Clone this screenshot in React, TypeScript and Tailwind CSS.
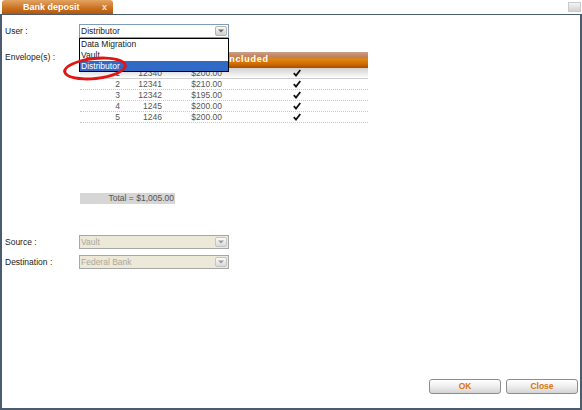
import React from 'react';

type Row = { n: number; env: string; amount: string };

const ROWS: Row[] = [
  { n: 1, env: '12340', amount: '$200.00' },
  { n: 2, env: '12341', amount: '$210.00' },
  { n: 3, env: '12342', amount: '$195.00' },
  { n: 4, env: '1245', amount: '$200.00' },
  { n: 5, env: '1246', amount: '$200.00' },
];

function Arrow({ disabled }: { disabled?: boolean }) {
  return (
    <div
      className={`flex h-[10px] w-[12px] items-center justify-center rounded-[2px] border ${
        disabled ? 'border-[#c4c4c4] bg-[linear-gradient(#fbfbfb,#d9d9d9)]' : 'border-[#b4b4b4] bg-[linear-gradient(#fafafa,#cfcfcf)]'
      }`}
    >
      <svg width="6" height="4" viewBox="0 0 6 4">
        <path d="M0 0.5h6L3 3.5z" fill={disabled ? '#9a9a9a' : '#6b6b6b'} />
      </svg>
    </div>
  );
}

function Select({ value, disabled }: { value: string; disabled?: boolean }) {
  return (
    <div
      className={`flex h-[14px] w-[150px] items-center justify-between border pl-[1px] pr-[1px] ${
        disabled ? 'border-[#a7a7a7] bg-[#ece9d8] text-[#aca899]' : 'border-[#7f9db9] bg-white text-[#222]'
      }`}
    >
      <span className="leading-[12px]">{value}</span>
      <Arrow disabled={disabled} />
    </div>
  );
}

function Check() {
  return (
    <svg width="8" height="8" viewBox="0 0 8 8">
      <path d="M0.8 4.2L3 6.6L7.3 1" fill="none" stroke="#111" strokeWidth="1.8" />
    </svg>
  );
}

function Button({ label }: { label: string }) {
  return (
    <button className="flex h-[15px] w-[72px] items-center justify-center rounded-[3px] border border-[#8d8d8d] bg-[linear-gradient(#ffffff,#f0f0f0_45%,#d4d4d4)] text-[8.5px] font-bold leading-none text-[#d9780f]">
      {label}
    </button>
  );
}

export default function App() {
  return (
    <div className="flex h-[410px] w-[582px] flex-col bg-white font-['Liberation_Sans',Arial,sans-serif] text-[8.5px] text-[#1a1a1a]">
      {/* tab strip */}
      <div className="flex h-[14px] items-start">
        <div className="ml-[2px] flex h-[14px] w-[111px] items-center rounded-t-[3px] bg-[linear-gradient(#e3a462,#cc7424_55%,#b3560c)] pl-[21px] pr-[4px]">
          <span className="text-[9px] font-bold leading-none text-white">Bank deposit</span>
          <span className="ml-auto mr-[2px] text-[9px] font-bold leading-none text-[#f3e3d3]">x</span>
        </div>
        <div className="ml-auto mr-[1px] mt-[2px] h-[10px] w-[13px] border border-[#c9c9c9] bg-[linear-gradient(#f4f4f4,#d2d2d2)]" />
      </div>

      {/* window body */}
      <div className="relative flex flex-1 flex-col border-b-2 border-l-2 border-r-2 border-t border-[#4b5c6e]">
        <div className="flex flex-col pl-[3px] pt-[9px]">
          <div className="flex items-center">
            <span className="w-[74px]">User :</span>
            <Select value="Distributor" />
          </div>

          <div className="mt-[14px] flex items-start">
            <span className="w-[74px] leading-[11px]">Envelope(s) :</span>
            <div className="ml-[1px] flex w-[288px] flex-col text-[#555]">
              <div className="flex h-[16px] items-center bg-[linear-gradient(#c9a089,#c27f55_32%,#e3850f_45%,#d06c00_75%,#a54c00)] text-[9px] font-bold tracking-[0.7px] text-white">
                <span className="w-[45px]" />
                <span className="w-[45px]">Envelope</span>
                <span className="w-[55px]">Amount</span>
                <span className="pl-[1px]">Included</span>
              </div>
              {ROWS.map((r, i) => (
                <div
                  key={r.n}
                  className={`flex h-[11px] items-center border-b border-dotted border-[#c8c8c8] leading-none ${
                    i === 0 ? 'bg-[linear-gradient(#d2d2d2,#ececec_60%,#ffffff)]' : ''
                  }`}
                >
                  <span className="w-[45px] pr-[5px] text-right">{r.n}</span>
                  <span className="w-[45px] pr-[8px] text-right">{r.env}</span>
                  <span className="w-[55px] pr-[3px] text-right">{r.amount}</span>
                  <span className="flex flex-1 justify-center">
                    <Check />
                  </span>
                </div>
              ))}
            </div>
          </div>

          <div className="ml-[75px] mt-[70px] flex h-[11px] w-[95px] items-center justify-end bg-[#d6d6d6] pr-[1px] text-[#555]">
            Total = $1,005.00
          </div>

          <div className="mt-[31px] flex items-center">
            <span className="w-[74px]">Source :</span>
            <Select value="Vault" disabled />
          </div>
          <div className="mt-[6px] flex items-center">
            <span className="w-[74px]">Destination :</span>
            <Select value="Federal Bank" disabled />
          </div>
        </div>

        <div className="mt-auto flex justify-end gap-[5px] pb-[14px] pr-[2px]">
          <Button label="OK" />
          <Button label="Close" />
        </div>

        {/* open user dropdown */}
        <div className="absolute left-[77px] top-[23px] flex w-[150px] flex-col border border-black bg-white">
          <span className="h-[11px] pl-[1px] leading-[11px]">Data Migration</span>
          <span className="h-[11px] pl-[1px] leading-[11px]">Vault</span>
          <span className="h-[10px] bg-[#316ac5] pl-[1px] leading-[10px] text-white">Distributor</span>
        </div>

        {/* red annotation */}
        <div className="absolute left-[61px] top-[42px] h-[23px] w-[64px] -rotate-[6deg] rounded-[50%] border-[3px] border-[#e01515]" />
      </div>
    </div>
  );
}
